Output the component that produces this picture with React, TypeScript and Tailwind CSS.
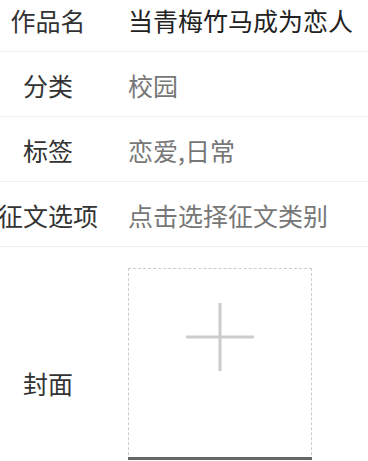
import React from "react";

const rows: { label: string; value: string; dark?: boolean }[] = [
  { label: "作品名", value: "当青梅竹马成为恋人", dark: true },
  { label: "分类", value: "校园" },
  { label: "标签", value: "恋爱,日常" },
  { label: "征文选项", value: "点击选择征文类别" },
];

export default function App() {
  return (
    <div
      className="w-[368px] h-[461px] overflow-hidden bg-white"
      style={{ fontFamily: '"Noto Sans CJK SC", "Noto Sans", sans-serif' }}
    >
      <div className="mt-[-13px]">
        {rows.map((r) => (
          <div
            key={r.label}
            className="flex items-center h-[65px] border-b border-[#eeeeee] pt-[3px]"
          >
            <div className="w-[96px] shrink-0 flex justify-center">
              <span className="shrink-0 whitespace-nowrap text-[25px] leading-none text-[#333333]">
                {r.label}
              </span>
            </div>
            <div
              className={`ml-[32px] whitespace-nowrap text-[25px] leading-none ${
                r.dark ? "text-[#222222]" : "text-[#777777]"
              }`}
            >
              {r.value}
            </div>
          </div>
        ))}
        <div className="flex items-center py-[21px]">
          <div className="w-[96px] shrink-0 flex justify-center pt-[3px]">
            <span className="whitespace-nowrap text-[25px] leading-none text-[#333333]">
              封面
            </span>
          </div>
          <div className="ml-[32px] w-[184px] h-[227px] border border-dashed border-[#cccccc] flex flex-col">
            <div className="h-[34px]" />
            <div className="flex justify-center">
              <svg width="68" height="68" viewBox="0 0 68 68">
                <rect x="32.5" y="0" width="3" height="68" fill="#cccccc" />
                <rect x="0" y="32.5" width="68" height="3" fill="#cccccc" />
              </svg>
            </div>
            <div className="h-[86px]" />
            <div className="h-[3px] -mx-px bg-[#666666]" />
          </div>
        </div>
      </div>
    </div>
  );
}
